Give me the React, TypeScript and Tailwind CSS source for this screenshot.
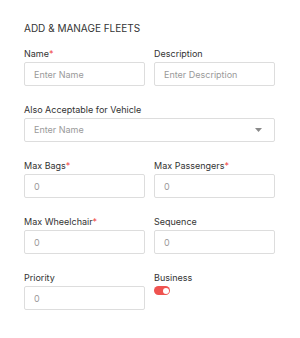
import { useState } from "react"

function Label({ text, required }: { text: string; required?: boolean }) {
  return (
    <div className="h-[12px] mb-[2px] text-[9px] leading-[12px] text-[#333333]">
      {text}
      {required && <span className="text-[#ef4444]">*</span>}
    </div>
  )
}

function Field({ label, placeholder, required }: { label: string; placeholder: string; required?: boolean }) {
  return (
    <div className="flex flex-col">
      <Label text={label} required={required} />
      <input
        placeholder={placeholder}
        className="h-[24px] w-full border border-[#dddddd] rounded-[2px] px-[9px] text-[9px] text-[#333333] placeholder:text-[#9a9a9a] outline-none"
      />
    </div>
  )
}

export default function App() {
  const [business, setBusiness] = useState(true)

  return (
    <div className="w-[300px] h-[338px] bg-white pt-[22px] pl-[24px]" style={{ fontFamily: "Inter, 'Liberation Sans', sans-serif" }}>
      <div className="w-[251px]">
        <h1 className="text-[10px] leading-[12px] text-[#333333] mb-[14px]">ADD &amp; MANAGE FLEETS</h1>

        <div className="grid grid-cols-2 gap-x-[9px] gap-y-[18px]">
          <Field label="Name" placeholder="Enter Name" required />
          <Field label="Description" placeholder="Enter Description" />

          {/* Select spans both columns */}
          <div className="col-span-2 flex flex-col">
            <Label text="Also Acceptable for Vehicle" />
            <div className="h-[24px] w-full border border-[#dddddd] rounded-[2px] px-[9px] flex items-center justify-between">
              <span className="text-[9px] text-[#9a9a9a]">Enter Name</span>
              <svg width="7" height="4" viewBox="0 0 7 4" className="mr-[3px]">
                <path d="M0 0h7L3.5 4z" fill="#8a8a8a" />
              </svg>
            </div>
          </div>

          <Field label="Max Bags" placeholder="0" required />
          <Field label="Max Passengers" placeholder="0" required />
          <Field label="Max Wheelchair" placeholder="0" required />
          <Field label="Sequence" placeholder="0" />
          <Field label="Priority" placeholder="0" />

          <div className="flex flex-col">
            <Label text="Business" />
            <button
              onClick={() => setBusiness(!business)}
              className={`w-[16px] h-[9px] rounded-full flex items-center px-[1.5px] ${
                business ? "bg-[#ef5350] justify-end" : "bg-[#cccccc] justify-start"
              }`}
            >
              <span className="w-[6px] h-[6px] rounded-full bg-white" />
            </button>
          </div>
        </div>
      </div>
    </div>
  )
}
